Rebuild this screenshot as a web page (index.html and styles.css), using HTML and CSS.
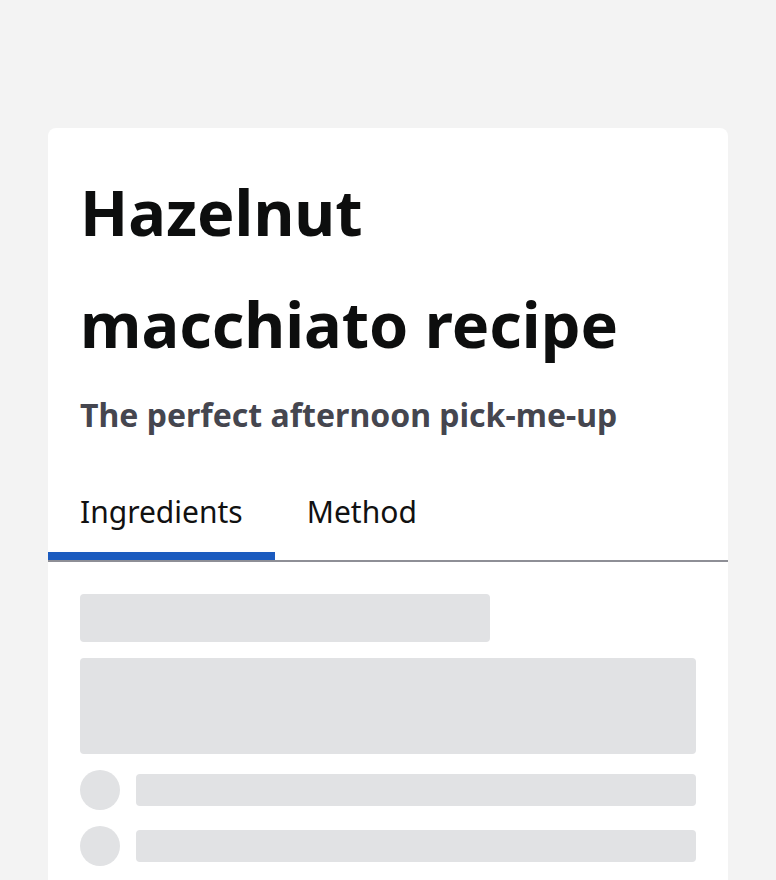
FILE: index.html
```html
<!DOCTYPE html>
<html lang="en">
<head>
    <meta charset="UTF-8">
    <meta name="viewport" content="width=device-width, initial-scale=1.0">
    <title>Hazelnut macchiato recipe</title>
    <link rel="stylesheet" href="styles.css">
</head>
<body>
    <div class="card">
        <div class="card-header">
            <h1>Hazelnut macchiato recipe</h1>
            <p class="subtitle">The perfect afternoon pick-me-up</p>
        </div>

        <div class="tabs">
            <button class="tab active">Ingredients</button>
            <button class="tab">Method</button>
        </div>

        <div class="tab-panel">
            <div class="skeleton skeleton-title"></div>
            <div class="skeleton skeleton-block"></div>
            <div class="skeleton-row">
                <div class="skeleton skeleton-dot"></div>
                <div class="skeleton skeleton-line"></div>
            </div>
            <div class="skeleton-row">
                <div class="skeleton skeleton-dot"></div>
                <div class="skeleton skeleton-line"></div>
            </div>
        </div>
    </div>
</body>
</html>
```

FILE: styles.css
```css
body {
    margin: 8px;
    background-color: #f3f3f3;
    font-family: "Noto Sans", Arial, sans-serif;
}
.card {
    margin: 120px 40px 0;
    background-color: #fff;
    border-radius: 8px;
}
.card-header {
    padding: 28px 32px 0;
}
h1 {
    margin: 0;
    font-size: 63px;
    line-height: 112px;
    font-weight: 700;
    color: #0d0e0e;
    max-width: 560px;
}
.subtitle {
    margin: 13px 0 0;
    font-size: 32px;
    line-height: 44px;
    font-weight: 700;
    color: #45464f;
}
.tabs {
    display: flex;
    margin-top: 43px;
    border-bottom: 2px solid #8e8f96;
}
.tab {
    box-sizing: content-box;
    padding: 12px 32px 20px;
    height: 40px;
    border: none;
    border-bottom: 8px solid transparent;
    background: none;
    font-family: "Noto Sans", Arial, sans-serif;
    font-size: 30px;
    line-height: 40px;
    color: #111;
    cursor: pointer;
}
.tab.active {
    border-bottom-color: #1b5bbf;
}
.tab-panel {
    display: flex;
    flex-direction: column;
    gap: 16px;
    padding: 32px;
}
.skeleton {
    background-color: #e1e2e4;
    border-radius: 4px;
}
.skeleton-title {
    width: 410px;
    height: 48px;
}
.skeleton-block {
    height: 96px;
}
.skeleton-row {
    display: flex;
    align-items: center;
    gap: 16px;
}
.skeleton-dot {
    flex: none;
    width: 40px;
    height: 40px;
    border-radius: 50%;
}
.skeleton-line {
    flex: 1;
    height: 32px;
}
```
